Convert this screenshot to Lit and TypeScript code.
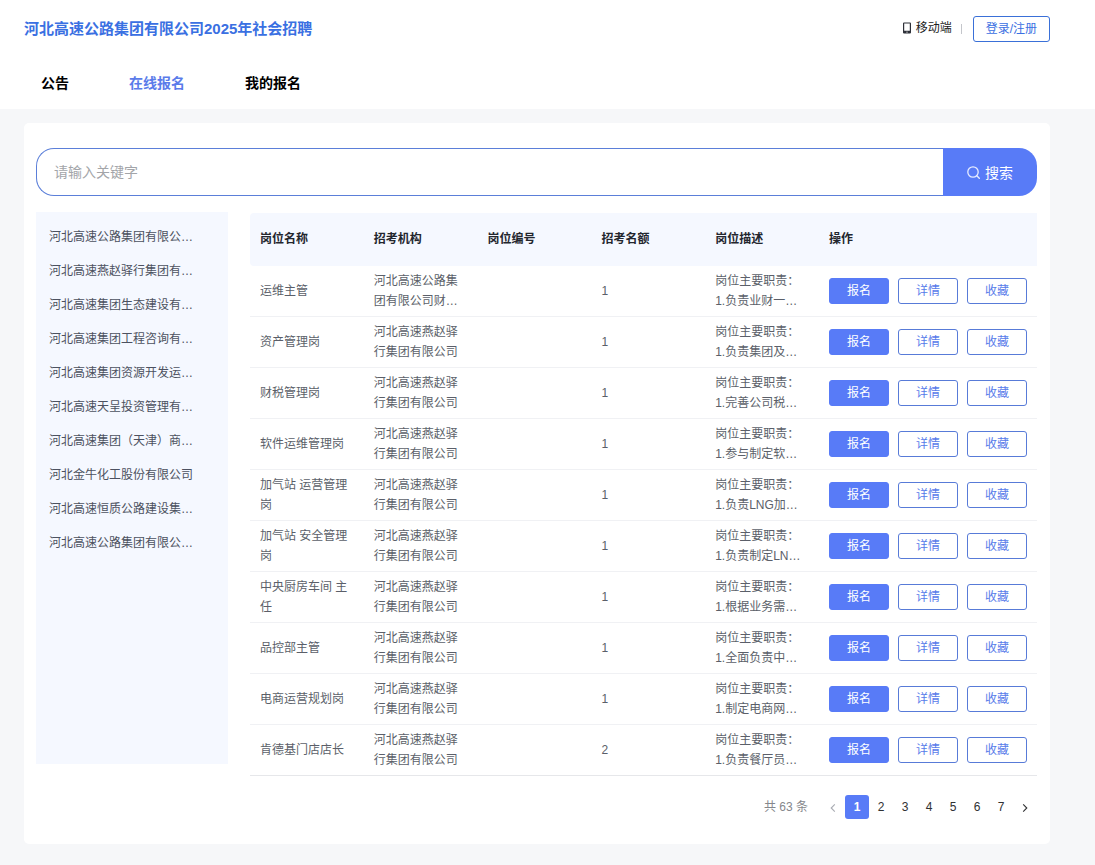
import { LitElement, html, css, svg } from "lit";
import { customElement, property, state } from "lit/decorators.js";
import { classMap } from "lit/directives/class-map.js";

interface Job {
  name: string;
  org: string;
  code: string;
  quota: number;
  duty: string;
}

const YANZHAO = "河北高速燕赵驿行集团有限公司";

const JOBS: Job[] = [
  { name: "运维主管", org: "河北高速公路集团有限公司财…", code: "", quota: 1, duty: "1.负责业财一…" },
  { name: "资产管理岗", org: YANZHAO, code: "", quota: 1, duty: "1.负责集团及…" },
  { name: "财税管理岗", org: YANZHAO, code: "", quota: 1, duty: "1.完善公司税…" },
  { name: "软件运维管理岗", org: YANZHAO, code: "", quota: 1, duty: "1.参与制定软…" },
  { name: "加气站 运营管理岗", org: YANZHAO, code: "", quota: 1, duty: "1.负责LNG加…" },
  { name: "加气站 安全管理岗", org: YANZHAO, code: "", quota: 1, duty: "1.负责制定LN…" },
  { name: "中央厨房车间 主任", org: YANZHAO, code: "", quota: 1, duty: "1.根据业务需…" },
  { name: "品控部主管", org: YANZHAO, code: "", quota: 1, duty: "1.全面负责中…" },
  { name: "电商运营规划岗", org: YANZHAO, code: "", quota: 1, duty: "1.制定电商网…" },
  { name: "肯德基门店店长", org: YANZHAO, code: "", quota: 2, duty: "1.负责餐厅员…" },
];

const COMPANIES = [
  "河北高速公路集团有限公…",
  "河北高速燕赵驿行集团有…",
  "河北高速集团生态建设有…",
  "河北高速集团工程咨询有…",
  "河北高速集团资源开发运…",
  "河北高速天呈投资管理有…",
  "河北高速集团（天津）商…",
  "河北金牛化工股份有限公司",
  "河北高速恒质公路建设集…",
  "河北高速公路集团有限公…",
];

const COLUMNS = ["岗位名称", "招考机构", "岗位编号", "招考名额", "岗位描述", "操作"];

@customElement("site-header")
export class SiteHeader extends LitElement {
  static styles = css`
    :host {
      display: block;
      background: #fff;
      padding: 16px 45px 0 24px;
    }
    .top {
      display: flex;
      align-items: center;
      justify-content: space-between;
      height: 26px;
    }
    .title {
      margin: 0;
      font-size: 15px;
      line-height: 24px;
      font-weight: 700;
      color: #3a70e2;
    }
    .tools {
      display: flex;
      align-items: center;
    }
    .mobile {
      display: flex;
      align-items: center;
      gap: 4px;
      padding-bottom: 2px;
      color: #222;
      font-size: 12px;
      line-height: 24px;
      text-decoration: none;
    }
    .phone {
      display: block;
      width: 10px;
      height: 12px;
    }
    .divider {
      width: 1px;
      height: 10px;
      margin: 0 11px 0 9px;
      background: #c4c6cb;
    }
    .login {
      box-sizing: border-box;
      height: 26px;
      padding: 0 12px;
      border: 1px solid #3a70d8;
      border-radius: 3px;
      background: #fff;
      color: #3a70e2;
      font: inherit;
      font-size: 12px;
      line-height: 24px;
    }
    .nav {
      display: flex;
      gap: 60px;
      padding: 29px 0 14px 17px;
    }
    .link {
      font-size: 14px;
      line-height: 24px;
      font-weight: 700;
      color: #000;
      text-decoration: none;
    }
    .active {
      color: #5a7bea;
    }
  `;

  render() {
    return html`
      <div class="top">
        <h1 class="title">河北高速公路集团有限公司2025年社会招聘</h1>
        <div class="tools">
          <a class="mobile" href="#mobile">
            <svg class="phone" viewBox="0 0 10 12" aria-hidden="true">
              <path
                fill="#2d3038"
                fill-rule="evenodd"
                d="M2 0.5h6a1 1 0 0 1 1 1v9a1 1 0 0 1-1 1h-6a1 1 0 0 1-1-1v-9a1 1 0 0 1 1-1ZM2.2 1.6v7.2h5.6V1.6ZM4.3 9.8v0.8h1.4v-0.8Z"
              />
            </svg>
            移动端
          </a>
          <span class="divider"></span>
          <button class="login" type="button">登录/注册</button>
        </div>
      </div>
      <nav class="nav">
        <a class="link" href="#notice">公告</a>
        <a class="link active" href="#apply" aria-current="page">在线报名</a>
        <a class="link" href="#mine">我的报名</a>
      </nav>
    `;
  }
}

@customElement("search-bar")
export class SearchBar extends LitElement {
  static styles = css`
    :host {
      display: block;
    }
    .form {
      display: flex;
      height: 48px;
    }
    .label {
      display: flex;
      flex: 1;
      min-width: 0;
    }
    .input {
      box-sizing: border-box;
      flex: 1;
      min-width: 0;
      padding: 0 17px;
      border: 1px solid #5b7fd9;
      border-right: 0;
      border-radius: 18px 0 0 18px;
      background: #fff;
      color: #333;
      font: inherit;
      font-size: 14px;
      outline: none;
    }
    .input::placeholder {
      color: #a3a5a9;
      opacity: 1;
    }
    .submit {
      display: flex;
      align-items: center;
      justify-content: center;
      gap: 5px;
      width: 94px;
      padding: 0;
      border: 0;
      border-radius: 0 18px 18px 0;
      background: #587bf7;
      color: #fff;
      font: inherit;
      font-size: 14px;
    }
    .glass {
      width: 13px;
      height: 13px;
    }
  `;

  render() {
    return html`
      <form class="form" role="search" @submit=${(e: Event) => e.preventDefault()}>
        <label class="label">
          <input class="input" type="text" placeholder="请输入关键字" aria-label="请输入关键字" />
        </label>
        <button class="submit" type="submit">
          <svg class="glass" viewBox="0 0 13 13" fill="none" stroke="#e6ecff" aria-hidden="true">
            <circle cx="6" cy="6" r="5.2" stroke-width="1.3" />
            <path d="M9.8 9.8 12.3 12.2" stroke-width="1.4" stroke-linecap="round" />
          </svg>
          搜索
        </button>
      </form>
    `;
  }
}

@customElement("company-list")
export class CompanyList extends LitElement {
  static styles = css`
    :host {
      display: block;
      box-sizing: border-box;
      min-height: 552px;
      padding: 8px 13px;
      background: #f5f8ff;
    }
    .list {
      margin: 0;
      padding: 0;
      list-style: none;
    }
    .item {
      display: block;
      overflow: hidden;
      color: #4c5160;
      font-size: 12px;
      line-height: 34px;
      white-space: nowrap;
      text-decoration: none;
    }
  `;

  render() {
    return html`
      <ul class="list">
        ${COMPANIES.map((c) => html`<li><a class="item" href="#company">${c}</a></li>`)}
      </ul>
    `;
  }
}

@customElement("job-table")
export class JobTable extends LitElement {
  static styles = css`
    :host {
      display: block;
    }
    .table {
      width: 100%;
      border-collapse: separate;
      border-spacing: 0;
      table-layout: fixed;
      font-size: 12px;
      line-height: 20px;
      color: #5b5f69;
    }
    .head {
      height: 51px;
      padding: 0 10px 2px;
      background: #f5f8ff;
      color: #23262e;
      font-weight: 700;
      text-align: left;
    }
    .head:first-child {
      border-radius: 4px 0 0 4px;
    }
    .head:last-child {
      width: 198px;
    }
    .cell {
      height: 40px;
      padding: 5px 10px;
      border-bottom: 1px solid #f0f1f4;
      vertical-align: middle;
    }
    .row:last-child .cell {
      border-bottom-color: #e6e7ea;
    }
    .actions {
      display: flex;
      gap: 9px;
    }
    .btn {
      box-sizing: border-box;
      width: 60px;
      height: 26px;
      padding: 0;
      border: 1px solid #587bd8;
      border-radius: 3px;
      background: #fff;
      color: #587bea;
      font: inherit;
      line-height: 24px;
    }
    .primary {
      border-color: #587bf7;
      background: #587bf7;
      color: #fff;
    }
  `;

  render() {
    return html`
      <table class="table">
        <thead>
          <tr>
            ${COLUMNS.map((c) => html`<th class="head" scope="col">${c}</th>`)}
          </tr>
        </thead>
        <tbody>
          ${JOBS.map(
            (j) => html`
              <tr class="row">
                <td class="cell">${j.name}</td>
                <td class="cell">${j.org}</td>
                <td class="cell">${j.code}</td>
                <td class="cell">${j.quota}</td>
                <td class="cell">岗位主要职责：<br />${j.duty}</td>
                <td class="cell">
                  <div class="actions">
                    <button class="btn primary" type="button">报名</button>
                    <button class="btn" type="button">详情</button>
                    <button class="btn" type="button">收藏</button>
                  </div>
                </td>
              </tr>
            `
          )}
        </tbody>
      </table>
    `;
  }
}

@customElement("page-nav")
export class PageNav extends LitElement {
  @property({ type: Number }) total = 63;
  @property({ type: Number }) pages = 7;
  @state() private current = 1;

  static styles = css`
    :host {
      display: flex;
      align-items: center;
      justify-content: flex-end;
      font-size: 12px;
      line-height: 24px;
    }
    .total {
      margin-right: 13px;
      color: #85878c;
    }
    .page {
      display: flex;
      align-items: center;
      justify-content: center;
      width: 24px;
      height: 24px;
      padding: 0;
      border: 0;
      border-radius: 3px;
      background: none;
      color: #303133;
      font: inherit;
    }
    .current {
      background: #587bf7;
      color: #fff;
      font-weight: 700;
    }
    .arrow {
      width: 6px;
      height: 8px;
      margin-top: 2px;
    }
    .page:disabled {
      color: #a8abb2;
    }
  `;

  private arrow(d: string) {
    return html`<svg class="arrow" viewBox="0 0 6 8" fill="none" stroke="currentColor" aria-hidden="true">
      ${svg`<path d=${d} stroke-width="1.1" />`}
    </svg>`;
  }

  private go(page: number) {
    this.current = Math.min(this.pages, Math.max(1, page));
  }

  render() {
    const numbers = Array.from({ length: this.pages }, (_, i) => i + 1);
    return html`
      <span class="total">共 ${this.total} 条</span>
      <button
        class="page"
        type="button"
        aria-label="上一页"
        ?disabled=${this.current === 1}
        @click=${() => this.go(this.current - 1)}
      >
        ${this.arrow("M4.8 0.4 1.2 4l3.6 3.6")}
      </button>
      ${numbers.map(
        (n) => html`<button
          class=${classMap({ page: true, current: n === this.current })}
          type="button"
          @click=${() => this.go(n)}
        >
          ${n}
        </button>`
      )}
      <button
        class="page"
        type="button"
        aria-label="下一页"
        ?disabled=${this.current === this.pages}
        @click=${() => this.go(this.current + 1)}
      >
        ${this.arrow("M1.2 0.4 4.8 4 1.2 7.6")}
      </button>
    `;
  }
}

@customElement("app-root")
export class AppRoot extends LitElement {
  static styles = css`
    :host {
      display: block;
      box-sizing: border-box;
      min-height: 100vh;
      padding-bottom: 21px;
      background: #f6f7f9;
      font-family: "Liberation Sans", "Noto Sans CJK SC", sans-serif;
    }
    .card {
      margin: 14px 45px 0 24px;
      padding: 25px 13px 25px 12px;
      border-radius: 5px;
      background: #fff;
    }
    .body {
      display: grid;
      grid-template-columns: 192px minmax(0, 1fr);
      align-items: start;
      gap: 22px;
      margin-top: 16px;
    }
    .results {
      display: grid;
      gap: 19px;
      padding-top: 1px;
    }
  `;

  render() {
    return html`
      <site-header></site-header>
      <main class="card">
        <search-bar></search-bar>
        <div class="body">
          <company-list></company-list>
          <section class="results">
            <job-table></job-table>
            <page-nav></page-nav>
          </section>
        </div>
      </main>
    `;
  }
}
